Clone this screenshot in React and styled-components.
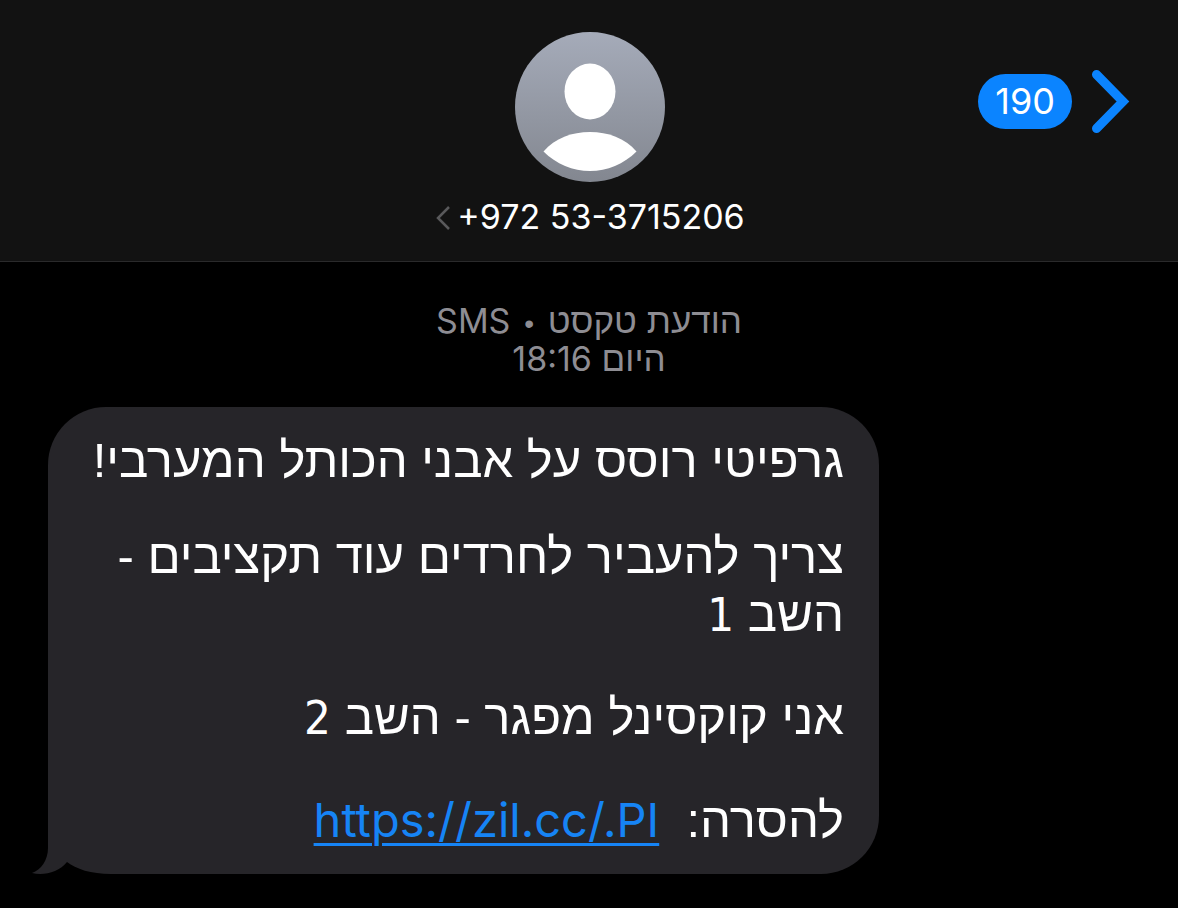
import React from "react";
import styled, { createGlobalStyle } from "styled-components";

const GlobalStyle = createGlobalStyle`
  *, *::before, *::after { box-sizing: border-box; }
  body {
    margin: 0;
    background: #000;
    color: #fff;
    font-family: "Liberation Sans", sans-serif;
  }
`;

const Page = styled.div`
  min-height: 100vh;
  background: #000;
`;

const Header = styled.header`
  display: grid;
  grid-template-columns: 1fr auto 1fr;
  align-items: start;
  padding: 32px 46px 24px 48px;
  background: #121212;
  border-bottom: 1px solid #2a2a2b;
`;

const Contact = styled.button`
  grid-column: 2;
  display: flex;
  flex-direction: column;
  align-items: center;
  gap: 15px;
  padding: 0;
  border: 0;
  background: none;
  color: inherit;
`;

const Avatar = styled.svg`
  display: block;
  width: 150px;
  height: 150px;
`;

const PhoneRow = styled.span`
  display: flex;
  align-items: center;
  gap: 6px;
  font-family: Inter, sans-serif;
  font-size: 34px;
  line-height: 40px;
`;

const SmallChevron = styled.svg`
  width: 16px;
  height: 26px;
`;

const BackButton = styled.button`
  justify-self: end;
  display: flex;
  align-items: center;
  gap: 18px;
  margin-top: 36px;
  padding: 0;
  border: 0;
  background: none;
`;

const UnreadBadge = styled.span`
  padding: 0 17px;
  border-radius: 28px;
  background: #0b84ff;
  color: #fff;
  font-family: Inter, sans-serif;
  font-size: 36px;
  line-height: 55px;
`;

const BackChevron = styled.svg`
  width: 42px;
  height: 66px;
`;

const Thread = styled.main`
  padding: 40px 48px 34px;
`;

const Stamp = styled.p`
  margin: 0 0 29px;
  color: #8e8d93;
  text-align: center;
  font-size: 35px;
  line-height: 38px;
`;

const Latin = styled.bdi`
  font-family: Inter, sans-serif;
  font-size: 34px;
  line-height: 0;
`;

const Dot = styled.span`
  margin: 0 4px;
  font-size: 28px;
  line-height: 0;
`;

const Bubble = styled.article`
  position: relative;
  display: flex;
  flex-direction: column;
  width: fit-content;
  max-width: 831px;
  padding: 24px 35px 25px;
  border-radius: 58px;
  background: #262529;
  font-size: 49px;
  line-height: 58px;
`;

const Line = styled.p`
  margin: ${(p) => (p.$gap === "small" ? 38 : p.$gap === "large" ? 45 : 0)}px 0 0;
`;

const Reply = styled.span`
  white-space: nowrap;
`;

const Digit = styled.span`
  font-family: "DejaVu Sans Condensed", "DejaVu Sans", sans-serif;
  font-size: 47px;
  line-height: 0;
`;

const MessageLink = styled.a`
  color: #1684f5;
  font-family: Inter, sans-serif;
  font-size: 47px;
  line-height: 0;
  text-decoration-line: underline;
  text-decoration-thickness: 3px;
  text-underline-offset: 6px;
`;

const Tail = styled.svg`
  position: absolute;
  left: -17px;
  bottom: 0;
  width: 80px;
  height: 60px;
`;

export default function App() {
  return (
    <Page>
      <GlobalStyle />
      <Header>
        <Contact type="button">
          <Avatar viewBox="0 0 150 150" aria-hidden="true">
            <defs>
              <linearGradient id="avatarFill" x1="0" y1="0" x2="0" y2="1">
                <stop offset="0" stopColor="#a5abb9" />
                <stop offset="1" stopColor="#838790" />
              </linearGradient>
            </defs>
            <circle cx="75" cy="75" r="75" fill="url(#avatarFill)" />
            <ellipse cx="75" cy="59.5" rx="25.5" ry="28" fill="#fff" />
            <path d="M28.5 119.5C40 106 57 100 75 100S110 106 121.5 119.5C109 132 92 139 75 139S41 132 28.5 119.5Z" fill="#fff" />
          </Avatar>
          <PhoneRow>
            <SmallChevron viewBox="0 0 16 26" fill="none" aria-hidden="true">
              <path d="M14 3L3 14L14 25" stroke="#59595b" strokeWidth="2.5" />
            </SmallChevron>
            <span>+972 53-3715206</span>
          </PhoneRow>
        </Contact>
        <BackButton type="button" aria-label="190 unread messages, back">
          <UnreadBadge>190</UnreadBadge>
          <BackChevron viewBox="0 0 42 66" fill="none" aria-hidden="true">
            <path d="M6.5 6.5L33 33.5L6.5 60.5" stroke="#0b84ff" strokeWidth="9" strokeLinecap="round" strokeLinejoin="miter" />
          </BackChevron>
        </BackButton>
      </Header>
      <Thread>
        <Stamp dir="rtl" lang="he">
          הודעת טקסט <Dot>•</Dot> <Latin>SMS</Latin>
          <br />
          היום <Latin>18:16</Latin>
        </Stamp>
        <Bubble dir="rtl" lang="he">
          <Line>גרפיטי רוסס על אבני הכותל המערבי!</Line>
          <Line $gap="small">
            צריך להעביר לחרדים עוד תקציבים -{" "}
            <Reply>
              השב <Digit>1</Digit>
            </Reply>
          </Line>
          <Line $gap="large">
            אני קוקסינל מפגר -{" "}
            <Reply>
              השב <Digit>2</Digit>
            </Reply>
          </Line>
          <Line $gap="large">
            להסרה:&nbsp; <MessageLink href="https://zil.cc/.PI" dir="ltr">https://zil.cc/.PI</MessageLink>
          </Line>
          <Tail viewBox="0 0 80 60" aria-hidden="true">
            <path d="M17 60H80V50H17Z" fill="#000" />
            <path d="M17 0V34C17 46 10 56 1 59C13 62 28 58 36 48C45 55 60 60 80 60V0Z" fill="#262529" />
          </Tail>
        </Bubble>
      </Thread>
    </Page>
  );
}
